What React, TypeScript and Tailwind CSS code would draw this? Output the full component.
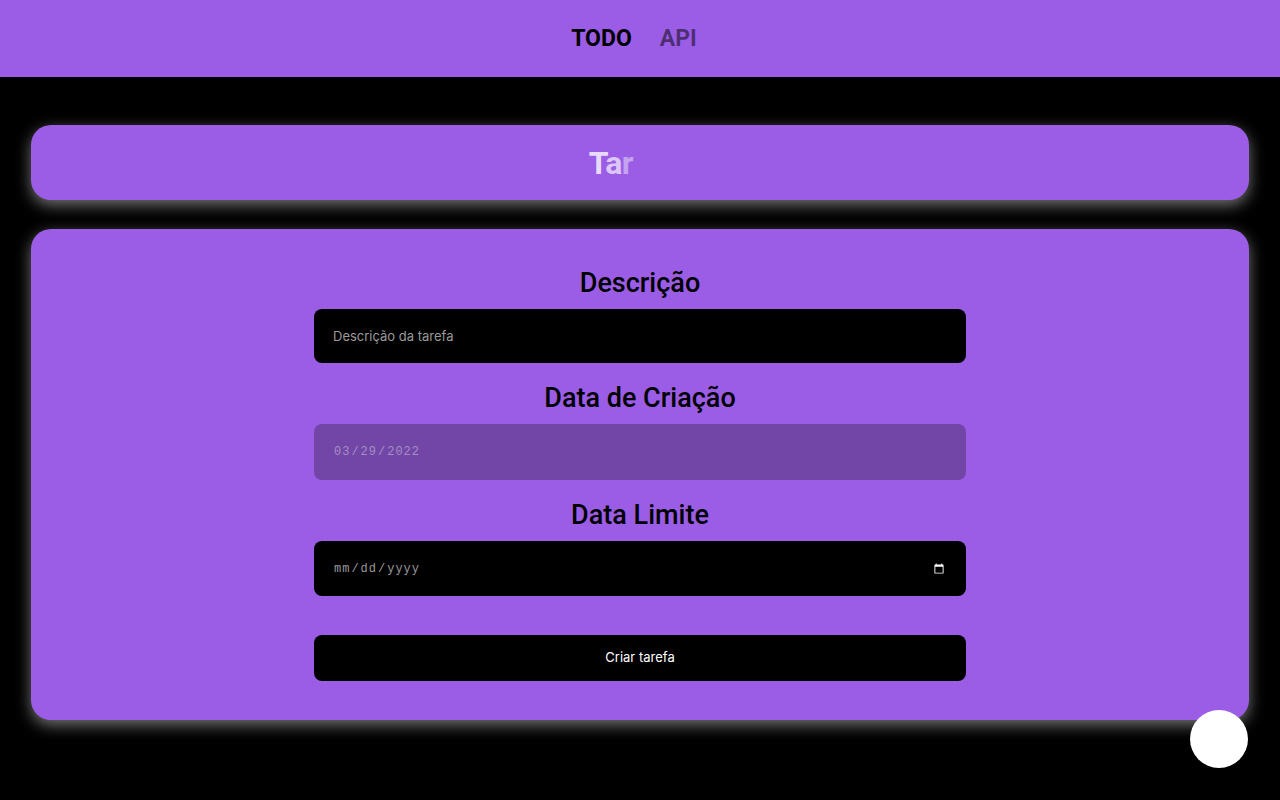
import React from 'react';

const Field: React.FC<{ label: string; children: React.ReactNode }> = ({ label, children }) => (
    <div className="flex flex-col items-center w-full">
        <h2 className="text-[27px] leading-[32px] font-medium text-black mb-[10px]">{label}</h2>
        {children}
    </div>
);

const App: React.FC = () => {
    return (
        <div className="min-h-screen bg-black font-['Roboto',sans-serif]">
            <header className="h-[77px] bg-[#9b5de5] flex items-center justify-center pt-[2px]">
                <nav className="flex items-center gap-[28px] ml-[-12px]">
                    <a className="text-[23px] font-bold text-black cursor-pointer">TODO</a>
                    <a className="text-[23px] font-bold text-black/50 cursor-pointer">API</a>
                </nav>
            </header>

            <main className="px-[31px] pt-[48px] flex flex-col gap-[29px]">
                <section className="h-[75px] rounded-[20px] bg-[#9b5de5] shadow-[0_5px_15px_rgba(255,255,255,0.45)] flex items-center justify-center">
                    <h1 className="text-[32px] font-bold tracking-tight">
                        <span className="text-[#e8dafb]">T</span>
                        <span className="text-[#dcc7f6]">a</span>
                        <span className="text-[#c6a3ef]">r</span>
                        <span className="text-transparent">efas</span>
                    </h1>
                </section>

                <section className="rounded-[20px] bg-[#9b5de5] shadow-[0_5px_15px_rgba(255,255,255,0.45)] pt-[38px] pb-[39px] flex justify-center">
                    <form className="w-[652px] flex flex-col items-center" onSubmit={(e) => e.preventDefault()}>
                        <Field label="Descrição">
                            <input
                                type="text"
                                placeholder="Descrição da tarefa"
                                className="w-full h-[54px] rounded-[8px] bg-black px-[19px] text-[13px] font-['Inter',sans-serif] text-white placeholder:text-[#9a9a9a] outline-none"
                            />
                        </Field>
                        <div className="h-[19px]" />
                        <Field label="Data de Criação">
                            <input
                                type="date"
                                disabled
                                defaultValue="2022-03-29"
                                className="w-full h-[56px] rounded-[8px] bg-[#7146a6] px-[19px] text-[12px] tracking-[1px] text-[#a58fc4] font-['Liberation_Mono',monospace] [color-scheme:dark] outline-none"
                            />
                        </Field>
                        <div className="h-[19px]" />
                        <Field label="Data Limite">
                            <input
                                type="date"
                                className="w-full h-[55px] rounded-[8px] bg-black px-[19px] text-[12px] tracking-[1px] text-[#9a9a9a] font-['Liberation_Mono',monospace] [color-scheme:dark] outline-none"
                            />
                        </Field>
                        <button
                            type="submit"
                            className="mt-[39px] w-full h-[46px] rounded-[8px] bg-black text-white text-[13px] font-['Inter',sans-serif]"
                        >
                            Criar tarefa
                        </button>
                    </form>
                </section>
            </main>

            <button className="fixed left-[1190px] top-[710px] w-[58px] h-[58px] rounded-full bg-white" />
        </div>
    );
};

export default App;
